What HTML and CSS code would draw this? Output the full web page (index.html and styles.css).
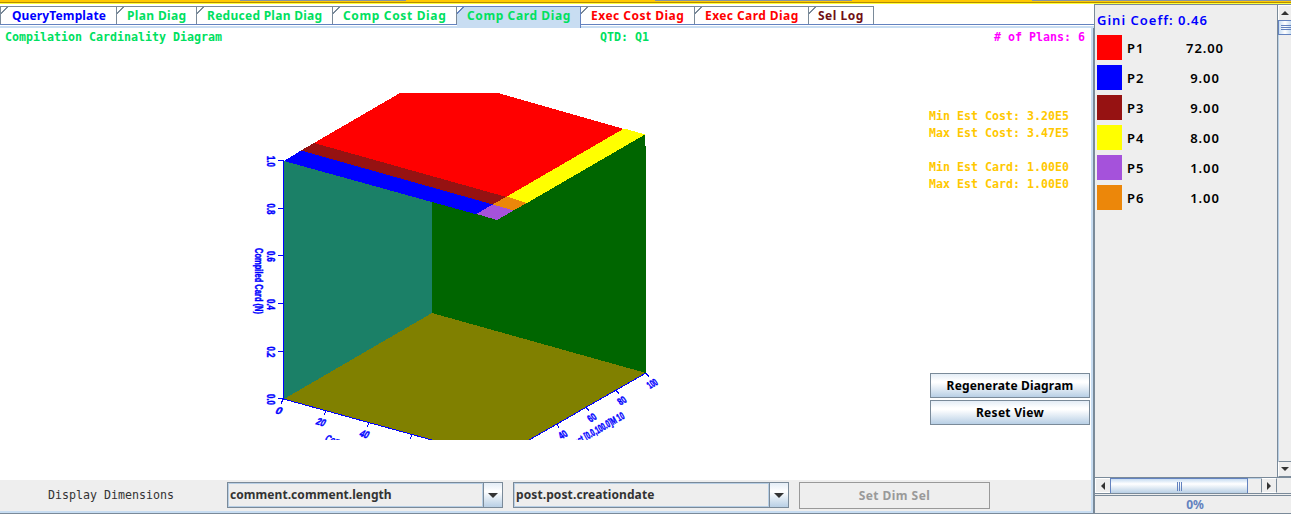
FILE: index.html
```html
<!DOCTYPE html>
<html lang="en">
<head>
<meta charset="utf-8">
<title>Compilation Cardinality Diagram</title>
<link rel="stylesheet" href="styles.css">
</head>
<body>
<div class="strip"><i></i><i></i><i></i></div>
<div class="window">
  <main class="left">
    <nav class="tabs">
      <div class="tab t1 blue"><span>QueryTemplate</span></div>
      <div class="tab t2"><span>Plan Diag</span></div>
      <div class="tab t3"><span>Reduced Plan Diag</span></div>
      <div class="tab t4"><span>Comp Cost Diag</span></div>
      <div class="tab t5 selected"><span>Comp Card Diag</span></div>
      <div class="tab t6 red"><span>Exec Cost Diag</span></div>
      <div class="tab t7 red"><span>Exec Card Diag</span></div>
      <div class="tab t8 maroon"><span>Sel Log</span></div>
    </nav>
    <section class="pane">
      <header class="heading mono"><span>Compilation Cardinality Diagram</span><span>QTD: Q1</span><span class="plans"># of Plans: 6</span></header>
      <div class="view">
        <svg class="chart" width="430" height="360" viewBox="240 80 430 360">
          <g shape-rendering="crispEdges">
            <path fill="#006600" d="M432 195L645 135V146H646V373L432 314Z"/>
            <path fill="#1b8067" d="M284 161L432 202V314L284 399Z"/>
            <path fill="#808000" d="M284 399L432 313L646 373L529 440H432Z"/>
            <path fill="#f00" d="M400 93H498L624 129L506 197L314 143Z"/>
            <path fill="#961212" d="M314 143L506.500 197L493 204.500L301 150.500Z"/>
            <path fill="#00f" d="M301 150.500L493 204.500L477 214.500L284 161Z"/>
            <path fill="#ff0" d="M624 128.500L645 134.500L527 203L506 197Z"/>
            <path fill="#ec870a" d="M506.500 196.500L527 203L513.500 210.500L492.500 204.500Z"/>
            <path fill="#a552db" d="M492.500 204.500L513.500 210.500L497 220L476.500 214Z"/>
            <g class="axis">
              <path d="M283.500 160V399L432 440M646 373L529 440"/>
              <path d="M278 160.500H284M278 208.500H284M278 255.500H284M278 303.500H284M278 351.500H284M278 398.500H284"/>
              <path d="M283 399L281 404M326 411L324 415M369 423L367 427M412 435L410 439M646 373L649 377M616 390L619 394M586 407L589 411M557 424L559 428"/>
            </g>
          </g>
          <g class="labels">
            <text transform="translate(266.500 156) rotate(90)" textLength="11" lengthAdjust="spacingAndGlyphs">1.0</text>
            <text transform="translate(266.500 203.500) rotate(90)" textLength="11" lengthAdjust="spacingAndGlyphs">0.8</text>
            <text transform="translate(266.500 251) rotate(90)" textLength="11" lengthAdjust="spacingAndGlyphs">0.6</text>
            <text transform="translate(266.500 299) rotate(90)" textLength="11" lengthAdjust="spacingAndGlyphs">0.4</text>
            <text transform="translate(266.500 346.500) rotate(90)" textLength="11" lengthAdjust="spacingAndGlyphs">0.2</text>
            <text transform="translate(266.500 394) rotate(90)" textLength="11" lengthAdjust="spacingAndGlyphs">0.0</text>
            <text transform="translate(255 248) rotate(90)" textLength="66" lengthAdjust="spacingAndGlyphs">Compiled Card (N)</text>
            <text transform="matrix(.96 .27 -.5 .87 274.500 413)" textLength="6" lengthAdjust="spacingAndGlyphs">0</text>
            <text transform="matrix(.96 .27 -.5 .87 315 424)" textLength="9" lengthAdjust="spacingAndGlyphs">20</text>
            <text transform="matrix(.96 .27 -.5 .87 358.500 436)" textLength="9" lengthAdjust="spacingAndGlyphs">40</text>
            <text transform="matrix(.96 .27 -.5 .87 324 441)" textLength="34" lengthAdjust="spacingAndGlyphs">Comment</text>
            <text transform="matrix(.87 -.5 .6 .8 650 389)" textLength="10" lengthAdjust="spacingAndGlyphs">100</text>
            <text transform="matrix(.87 -.5 .6 .8 620.500 405.500)" textLength="8" lengthAdjust="spacingAndGlyphs">80</text>
            <text transform="matrix(.87 -.5 .6 .8 590.500 422.500)" textLength="8" lengthAdjust="spacingAndGlyphs">60</text>
            <text transform="matrix(.87 -.5 .6 .8 561.500 439.500)" textLength="8" lengthAdjust="spacingAndGlyphs">40</text>
            <text transform="matrix(.87 -.5 .5 .87 573 448)" textLength="60" lengthAdjust="spacingAndGlyphs">Post [0.0,100.0]M 10</text>
          </g>
        </svg>
        <aside class="side">
          <div class="stats mono"><p>Min Est Cost: 3.20E5</p><p>Max Est Cost: 3.47E5</p><p class="gap">Min Est Card: 1.00E0</p><p>Max Est Card: 1.00E0</p></div>
          <div class="actions"><button class="regen">Regenerate Diagram</button><button class="reset">Reset View</button></div>
        </aside>
      </div>
      <footer class="dims">
        <label class="mono">Display Dimensions</label>
        <div class="combo"><span class="c1">comment.comment.length</span><b><svg width="10" height="5"><path d="M0 0H10L5 5Z"/></svg></b></div>
        <div class="combo"><span class="c2">post.post.creationdate</span><b><svg width="10" height="5"><path d="M0 0H10L5 5Z"/></svg></b></div>
        <button class="setdim" disabled>Set Dim Sel</button>
      </footer>
    </section>
  </main>
  <aside class="right">
    <div class="scroller">
      <div class="legend">
        <div class="gini">Gini Coeff: 0.46</div>
        <div class="row"><i class="p1"></i><span>P1</span><em>72.00</em></div>
        <div class="row"><i class="p2"></i><span>P2</span><em>9.00</em></div>
        <div class="row"><i class="p3"></i><span>P3</span><em>9.00</em></div>
        <div class="row"><i class="p4"></i><span>P4</span><em>8.00</em></div>
        <div class="row"><i class="p5"></i><span>P5</span><em>1.00</em></div>
        <div class="row"><i class="p6"></i><span>P6</span><em>1.00</em></div>
      </div>
      <div class="vbar"><div class="up"><svg width="8" height="4"><path d="M0 4L4 0L8 4Z"/></svg></div><div class="vthumb"><i></i><i></i><i></i></div><div class="vtrack"></div><div class="down"><svg width="8" height="4"><path d="M0 0H8L4 4Z"/></svg></div></div>
    </div>
    <div class="hbar"><div class="arrow"><svg width="4" height="8"><path d="M4 0V8L0 4Z"/></svg></div><div class="hthumb"><i></i><i></i><i></i></div><div class="htrack"></div><div class="arrow next"><svg width="4" height="8"><path d="M0 0V8L4 4Z"/></svg></div></div>
    <div class="progress">0%</div>
  </aside>
</div>
</body>
</html>
```
FILE: styles.css
```css
* { box-sizing: border-box; }
body { margin: 0; width: 1291px; height: 514px; overflow: hidden; background: #fff; font: bold 12px/16px "Noto Sans", "Open Sans", sans-serif; color: #000; }
p { margin: 0; }
button { font: inherit; padding: 1px 0 0; border: 1px solid #7a8a99; color: #000; background: linear-gradient(#e4edf6, #fff 30%, #fff 38%, #b8cfe5); }
.mono { font: bold 11.63px/17px "DejaVu Sans Mono", monospace; }
.strip { height: 4px; background: linear-gradient(#ffc800 2px, #b58d00 2px 3px, #ffff38 3px); display: flex; }
.strip i { height: 1px; background: #8494a2; width: 166px; margin-left: 240px; }
.strip i + i { width: 197px; margin-left: 249px; }
.strip i + i + i { width: 259px; margin-left: 180px; }
.window { display: flex; height: 510px; }
.left { width: 1094px; height: 510px; display: flex; flex-direction: column; }
.tabs { height: 24px; padding-top: 2px; display: flex; background: linear-gradient(#fff 20px, #6382bf 20px 21px, #fff 21px 22px, #c8ddf2 22px); }
.tab { height: 18px; border-top: 1px solid #7a8a99; border-right: 1px solid #7a8a99; padding-left: 10px; color: #00e060; white-space: nowrap; line-height: 18px; background: linear-gradient(135deg, #fff 4px, #7a8a99 4px 5px, transparent 5px); }
.t1 { width: 117px; padding-left: 11px; border-left: 1px solid #7a8a99; letter-spacing: .13px; }
.t2 { width: 80px; letter-spacing: .35px; }
.t3 { width: 136px; letter-spacing: .27px; }
.t4 { width: 124px; letter-spacing: .65px; }
.t5 { width: 124px; letter-spacing: .6px; }
.t6 { width: 114px; letter-spacing: .48px; }
.t7 { width: 114px; letter-spacing: .42px; }
.t8 { width: 65px; padding-left: 9px; letter-spacing: .5px; }
.tab.selected { height: 22px; border-color: #6382bf; background: linear-gradient(135deg, #fff 4px, #6382bf 4px 5px, #c8ddf2 5px); }
.blue { color: #00f; }
.red { color: #f00; }
.maroon { color: #701015; }
.pane { height: 486px; border-right: 1px solid #7a8a99; border-bottom: 1px solid #7a8a99; box-shadow: inset -2px -2px #c8ddf2; padding: 0 2px 2px 0; display: flex; flex-direction: column; }
.heading { height: 52px; padding-left: 5px; display: grid; grid-template-columns: 595px 299px 1fr; color: #00e060; line-height: 19px; }
.plans { color: #f0f; text-align: right; padding-right: 6px; }
.view { height: 400px; padding-left: 240px; display: flex; justify-content: space-between; }
.axis { fill: none; stroke: #00f; stroke-width: 1; }
.labels { fill: #00f; stroke: #00f; stroke-width: .45px; font: bold 10.5px "Liberation Sans", sans-serif; }
.side { width: 161px; padding-top: 28px; }
.stats { color: #ffc800; height: 265px; margin-left: -1px; }
.gap { margin-top: 17px; }
.actions { display: flex; flex-direction: column; gap: 2px; }
.actions button { width: 160px; height: 25px; }
.regen { letter-spacing: .17px; }
.reset { letter-spacing: .3px; }
.dims { height: 31px; background: #eee; padding: 2px 0 0 48px; display: flex; }
.dims label { width: 179px; font-weight: normal; line-height: 27px; color: #333; }
.combo { width: 276px; height: 26px; margin-right: 10px; border: 1px solid #7a8a99; color: #333; display: flex; }
.combo span { flex: 1; border: 1px solid #b8cfe5; padding-left: 1px; line-height: 22px; }
.combo b { width: 19px; border-left: 1px solid #7a8a99; background: linear-gradient(#e4edf6, #fff 35%, #b8cfe5); display: flex; align-items: center; justify-content: center; }
.c1 { letter-spacing: .06px; }
.c2 { letter-spacing: .1px; }
.setdim { width: 191px; height: 27px; background: #eee; border-color: #999; color: #999; letter-spacing: .45px; }
svg { display: block; flex: none; }
.right { width: 197px; display: flex; flex-direction: column; background: #eee; border-left: 1px solid #7a8a99; border-top: 1px solid #7a8a99; }
.scroller { height: 472px; display: flex; }
.legend { width: 182px; padding: 7px 0 0 2px; font-size: 13px; font-weight: 600; letter-spacing: .9px; }
.gini { height: 23px; color: #00f; letter-spacing: 1px; }
.row { display: flex; height: 30px; line-height: 27px; }
.row i { width: 25px; height: 25px; margin-right: 5px; }
.row span { width: 46px; }
.row em { width: 64px; text-align: center; font-style: normal; }
.p1 { background: #f00; } .p2 { background: #00f; } .p3 { background: #961212; } .p4 { background: #ff0; } .p5 { background: #a552db; } .p6 { background: #ec870a; }
.vbar { width: 14px; border-left: 1px solid #7a8a99; display: flex; flex-direction: column; }
.vbar svg, .hbar svg, .combo svg { fill: #333; }
.up, .down { height: 15px; display: flex; align-items: center; justify-content: center; border-left: 1px solid #fff; border-top: 1px solid #fff; }
.down { border-top-color: #7a8a99; height: 16px; border-bottom: 1px solid #7a8a99; }
.vthumb { height: 15px; border: 1px solid #6382bf; border-right: 0; background: linear-gradient(90deg, #c8ddf2, #fff, #c8ddf2); padding: 4px 0 0 2px; }
.vthumb i { display: block; height: 1px; margin-bottom: 1px; background: #6382bf; }
.vtrack { flex: 1; border-left: 1px solid #b8cfe5; }
.hbar { height: 17px; display: flex; border-top: 1px solid #7a8a99; border-bottom: 1px solid #7a8a99; }
.arrow { width: 15px; display: flex; align-items: center; justify-content: center; border: 1px solid #fff; border-right: 0; }
.hthumb { width: 138px; border: 1px solid #6382bf; border-bottom: 0; background: linear-gradient(#c8ddf2, #fff 35%, #b8cfe5); display: flex; align-items: center; justify-content: center; gap: 1px; }
.hthumb i { width: 1px; height: 9px; background: #6382bf; }
.htrack { width: 13px; border-top: 1px solid #b8cfe5; }
.next { width: 16px; border-left-color: #7a8a99; border-right: 1px solid #7a8a99; }
.progress { height: 19px; border: 1px solid #7a8a99; border-width: 1px 0; margin-top: 1px; line-height: 18px; text-align: center; color: #6382bf; width: 200px; }
```
